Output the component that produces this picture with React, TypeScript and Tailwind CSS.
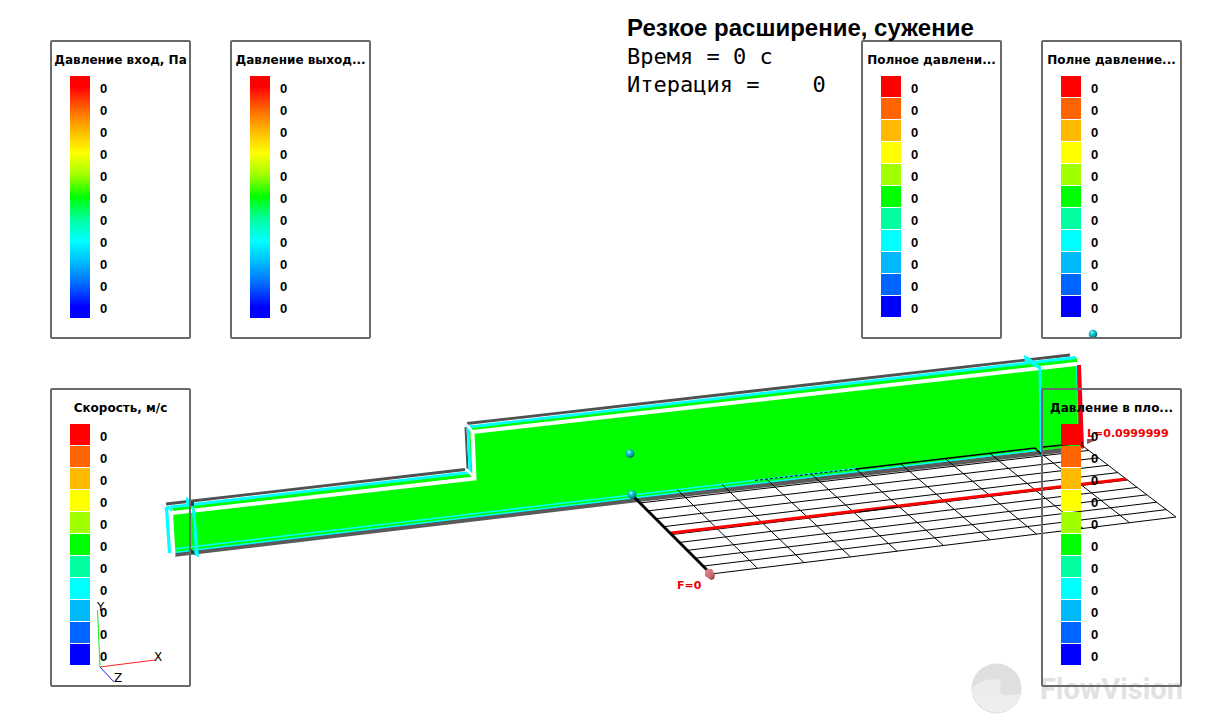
import React from "react";

type LegendProps = { title: string; smooth?: boolean };
type Point = [number, number];

const SCALE = [
  "bg-[#ff0000]",
  "bg-[#ff6400]",
  "bg-[#ffb900]",
  "bg-[#ffff00]",
  "bg-[#a0ff00]",
  "bg-[#00ff00]",
  "bg-[#00ffa0]",
  "bg-[#00ffff]",
  "bg-[#00b9ff]",
  "bg-[#0064ff]",
  "bg-[#0000ff]",
];

function Legend({ title, smooth = false }: LegendProps) {
  return (
    <section className="w-[141px] shrink-0 rounded-xs border-2 border-[#6a6a6a] pt-[10px] pb-[19px] font-bold text-black">
      <h2 className="mb-2 text-center font-['DejaVu_Sans',sans-serif] text-[12px] leading-4 whitespace-nowrap">
        {title}
      </h2>
      <div className="flex gap-[10px] pl-[18px]">
        {smooth ? (
          <div className="w-5 bg-[linear-gradient(to_bottom,#ff0000_4.5%,#ff6400_13.6%,#ffb900_22.7%,#ffff00_31.8%,#a0ff00_40.9%,#00ff00_50%,#00ffa0_59.1%,#00ffff_68.2%,#00b9ff_77.3%,#0064ff_86.4%,#0000ff_95.5%)]" />
        ) : (
          <div className="flex w-5 flex-col gap-px pb-px">
            {SCALE.map((color) => (
              <div key={color} className={`h-[21px] ${color}`} />
            ))}
          </div>
        )}
        <ul className="font-['Liberation_Sans',sans-serif] text-[13px]">
          {SCALE.map((color) => (
            <li key={color} className="h-[22px] leading-[26px]">
              0
            </li>
          ))}
        </ul>
      </div>
    </section>
  );
}

const lerp = (a: Point, b: Point, t: number): Point => [
  a[0] + (b[0] - a[0]) * t,
  a[1] + (b[1] - a[1]) * t,
];

const GRID = {
  farLeft: [633, 495] as Point,
  farRight: [1079, 443] as Point,
  nearRight: [1176, 517] as Point,
  nearLeft: [711, 574] as Point,
};

const STEPS = [1, 2, 3, 4, 5, 6, 7, 8, 9, 10];

function GridPlane() {
  return (
    <g stroke="#000" strokeWidth="1">
      {STEPS.map((i) => {
        const [x1, y1] = lerp(GRID.farLeft, GRID.farRight, i / 10);
        const [x2, y2] = lerp(GRID.nearLeft, GRID.nearRight, i / 10);
        return <line key={`c${i}`} x1={x1} y1={y1} x2={x2} y2={y2} />;
      })}
      {STEPS.map((i) => {
        const [x1, y1] = lerp(GRID.farLeft, GRID.nearLeft, i / 10);
        const [x2, y2] = lerp(GRID.farRight, GRID.nearRight, i / 10);
        return <line key={`r${i}`} x1={x1} y1={y1} x2={x2} y2={y2} />;
      })}
      <path d="M671 533 L1126 479" stroke="#f00" strokeWidth="3" />
      <path d="M859 512 L898 507" />
      <path d="M755 480.500 L860 468.500" strokeDasharray="3 2" />
      <path d="M856 469 L1035 448 L1043 456 M1043 447 L1083 443" strokeWidth="1.4" fill="none" />
      <path d="M633 496 L709 572" strokeWidth="2.8" />
    </g>
  );
}

function Ball({ x, y }: { x: number; y: number }) {
  return <circle cx={x} cy={y} r="4.3" fill="url(#ball)" />;
}

function Scene() {
  return (
    <svg
      className="absolute inset-0 h-full w-full"
      viewBox="0 0 1231 726"
      preserveAspectRatio="xMinYMin meet"
      role="img"
      aria-label="3D"
    >
      <defs>
        <radialGradient id="ball" cx="0.38" cy="0.32" r="0.7">
          <stop offset="0" stopColor="#b8ffff" />
          <stop offset="0.3" stopColor="#12d0d8" />
          <stop offset="0.7" stopColor="#0a9aa2" />
          <stop offset="1" stopColor="#044a50" />
        </radialGradient>
        <linearGradient id="cone" x1="0" y1="0" x2="1" y2="1">
          <stop offset="0" stopColor="#f08a8a" />
          <stop offset="0.6" stopColor="#c96e6e" />
          <stop offset="1" stopColor="#6b3030" />
        </linearGradient>
      </defs>

      <path
        fill="#0f0"
        d="M170 508 L470 473 L468 427 L1077 358 L1082 446 L630 499 L174 553 Z"
      />
      <g fill="none" strokeWidth="2.800">
        <path stroke="#505050" d="M166 504 L465 469.500 M467 423.500 L1070 355" />
        <path stroke="#505050" strokeWidth="2" d="M465.500 427 L467.500 469" />
        <path stroke="#5a5a5a" strokeWidth="4.500" d="M175 554.500 L632 500.500 L1040 453 L1081 448" />
        <path stroke="#0ff" d="M167 507.500 L470 472.500 L468 427 L1076 357.500" />
        <path stroke="#0ff" strokeWidth="1.500" d="M174 549 L632 495 L860 468" />
        <path stroke="#0ff" strokeWidth="1.500" d="M174 552.500 L632 498 L1036 450.500" />
      </g>
      <g fill="none" stroke="#fff" strokeWidth="4">
        <path d="M168 508 L173 513 L474.500 478.500 L472.500 432 L1078 363.800" />
        <path strokeWidth="2.500" d="M466 424 L473 432 M466 469 L475 478" />
        <path d="M171 512 L173.500 556" />
      </g>
      <path stroke="#0ff" strokeWidth="3.200" d="M166.500 507 L169.500 553" />
      <path stroke="#0ff" strokeWidth="2" fill="none" d="M165 510 Q167 505 172 511" />
      <path fill="#0ff" d="M186 497 L188 498 L192 505 L195 510 L199 557 L196 556 L191 552 L195 551 L192 508 L186 505 Z" />
      <path fill="#244" d="M190 502 h4 v4 h-4 Z M191 549 l3 2 l1 4 l-4 -2 Z" />

      <path fill="#0ff" d="M1024 355 L1030 358 L1041 367 L1043 459 L1040 456 L1038.500 369 L1028 362 L1025 363 Z" />
      <path stroke="#0ff" d="M1076.500 366 L1078 424" />
      <path fill="#f00012" d="M1077 365 L1081 365 L1084 448 L1082 449 L1079 444 Z" />
      <path fill="#955" d="M1087 439 L1093 439 L1094 441 L1087 444 Z" />

      <GridPlane />

      <path fill="url(#cone)" d="M707 569 L712 569 L715 575 L714 579 L711 580 L705 576 L705 572 Z" />
      <Ball x={630} y={453.5} />
      <Ball x={632} y={494.5} />
      <Ball x={1093} y={334} />

      <g className="font-['DejaVu_Sans',sans-serif] text-[11px] font-bold" fill="#f00000">
        <text x="677" y="589">F=0</text>
        <text x="1087" y="437">L=0.0999999</text>
      </g>

      <path stroke="#f22" d="M100 667 L155 660" />
      <path stroke="#1e1" d="M100 667 L97.500 610" />
      <path stroke="#22e" d="M100 667 L114 682" />
      <g className="font-['DejaVu_Sans',sans-serif] text-[12px]" fill="#000">
        <text x="154" y="661">X</text>
        <text x="97" y="611">Y</text>
        <text x="114" y="682">Z</text>
      </g>
    </svg>
  );
}

function Watermark() {
  return (
    <div className="absolute right-12 bottom-3 flex items-center gap-[18px]">
      <svg className="size-[51px]" viewBox="0 0 51 51" aria-hidden="true">
        <defs>
          <linearGradient id="wave" x1="0" y1="0" x2="0" y2="1">
            <stop offset="0" stopColor="#ebebeb" />
            <stop offset="1" stopColor="#efefef" />
          </linearGradient>
        </defs>
        <circle cx="25.500" cy="25.500" r="25" fill="#dfdfdf" />
        <path
          fill="url(#wave)"
          d="M1 26 C6 19 15 16 24 16 C28 16 30 17 30 19 C30 22 28 24 29 28 C30 31 32 32 36 32 L50 31 A25 25 0 0 1 1 26 Z"
        />
      </svg>
      <span className="font-['Roboto',sans-serif] text-[29px] leading-9 font-bold text-[#e2e2e2]">
        FlowVision
      </span>
    </div>
  );
}

export default function App() {
  return (
    <main className="relative min-h-screen overflow-hidden bg-white pt-[14px] pr-[49px] pb-9 pl-[50px] text-black">
      <Watermark />
      <Scene />
      <div className="relative flex items-start">
        <div className="mt-[26px] flex gap-[39px]">
          <Legend title="Давление вход, Па" smooth />
          <Legend title="Давление выход..." smooth />
        </div>
        <header className="relative z-10 min-w-0 flex-1 pl-64 whitespace-pre">
          <h1 className="mb-px font-['Liberation_Sans',sans-serif] text-[24px] leading-7 font-bold">
            Резкое расширение, сужение
          </h1>
          <p className="font-['DejaVu_Sans_Mono',monospace] text-[22px] leading-7">Время = 0 с</p>
          <p className="font-['DejaVu_Sans_Mono',monospace] text-[22px] leading-7">
            {"Итерация =    0"}
          </p>
        </header>
        <div className="mt-[26px] flex gap-[39px]">
          <Legend title="Полное давлени..." />
          <Legend title="Полне давление..." />
        </div>
      </div>
      <div className="relative mt-[49px] flex justify-between">
        <Legend title="Скорость, м/с" />
        <Legend title="Давление в пло..." />
      </div>
    </main>
  );
}
